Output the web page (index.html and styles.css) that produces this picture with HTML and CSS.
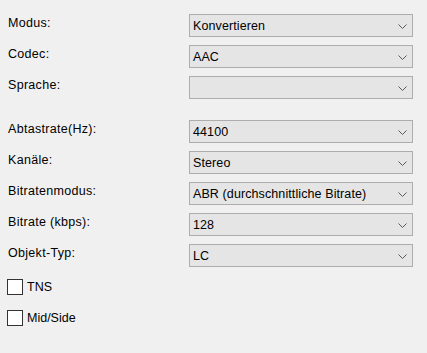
FILE: index.html
```html
<!DOCTYPE html>
<html>
<head>
<meta charset="utf-8">
<link rel="stylesheet" href="styles.css">
</head>
<body>
<div class="panel">
  <div class="grid">
    <div class="label">Modus:</div>
    <div class="combo"><span class="val">Konvertieren</span><svg class="chev" width="9" height="5" viewBox="0 0 9 5"><path d="M0.5 0.5 L4.5 4.5 L8.5 0.5" fill="none" stroke="#5a5a5a" stroke-width="1"/></svg></div>
    <div class="label">Codec:</div>
    <div class="combo"><span class="val">AAC</span><svg class="chev" width="9" height="5" viewBox="0 0 9 5"><path d="M0.5 0.5 L4.5 4.5 L8.5 0.5" fill="none" stroke="#5a5a5a" stroke-width="1"/></svg></div>
    <div class="label">Sprache:</div>
    <div class="combo"><span class="val"></span><svg class="chev" width="9" height="5" viewBox="0 0 9 5"><path d="M0.5 0.5 L4.5 4.5 L8.5 0.5" fill="none" stroke="#5a5a5a" stroke-width="1"/></svg></div>
  </div>
  <div class="grid second">
    <div class="label">Abtastrate(Hz):</div>
    <div class="combo"><span class="val">44100</span><svg class="chev" width="9" height="5" viewBox="0 0 9 5"><path d="M0.5 0.5 L4.5 4.5 L8.5 0.5" fill="none" stroke="#5a5a5a" stroke-width="1"/></svg></div>
    <div class="label">Kanäle:</div>
    <div class="combo"><span class="val">Stereo</span><svg class="chev" width="9" height="5" viewBox="0 0 9 5"><path d="M0.5 0.5 L4.5 4.5 L8.5 0.5" fill="none" stroke="#5a5a5a" stroke-width="1"/></svg></div>
    <div class="label">Bitratenmodus:</div>
    <div class="combo"><span class="val">ABR (durchschnittliche Bitrate)</span><svg class="chev" width="9" height="5" viewBox="0 0 9 5"><path d="M0.5 0.5 L4.5 4.5 L8.5 0.5" fill="none" stroke="#5a5a5a" stroke-width="1"/></svg></div>
    <div class="label">Bitrate (kbps):</div>
    <div class="combo"><span class="val">128</span><svg class="chev" width="9" height="5" viewBox="0 0 9 5"><path d="M0.5 0.5 L4.5 4.5 L8.5 0.5" fill="none" stroke="#5a5a5a" stroke-width="1"/></svg></div>
    <div class="label">Objekt-Typ:</div>
    <div class="combo"><span class="val">LC</span><svg class="chev" width="9" height="5" viewBox="0 0 9 5"><path d="M0.5 0.5 L4.5 4.5 L8.5 0.5" fill="none" stroke="#5a5a5a" stroke-width="1"/></svg></div>
  </div>
  <div class="checks">
    <label class="check"><span class="box"></span><span>TNS</span></label>
    <label class="check"><span class="box"></span><span>Mid/Side</span></label>
  </div>
</div>
</body>
</html>
```
FILE: styles.css
```css
html, body {
  margin: 0;
  padding: 0;
  background: #f0f0f0;
}
body {
  width: 427px;
  height: 353px;
  overflow: hidden;
  font-family: "Liberation Sans", Arial, sans-serif;
  font-size: 12.5px;
  color: #000;
}
.panel {
  padding: 14px 0 0 8px;
}
.grid {
  display: grid;
  grid-template-columns: 181px 224px;
  grid-auto-rows: 23px;
  row-gap: 8px;
}
.second {
  margin-top: 21px;
}
.label {
  line-height: 16px;
  padding-top: 1px;
  letter-spacing: 0.3px;
}
.combo {
  box-sizing: border-box;
  height: 23px;
  background: #e5e5e5;
  border: 1px solid #adadad;
  display: flex;
  align-items: center;
  justify-content: space-between;
  padding: 0 5px 0 3px;
}
.val {
  line-height: 16px;
  padding-top: 1px;
  letter-spacing: 0.1px;
}
.chev {
  display: block;
  margin-top: 1px;
}
.checks {
  margin-top: 12px;
  display: flex;
  flex-direction: column;
  gap: 15px;
}
.check {
  display: flex;
  align-items: center;
  gap: 4px;
  height: 16px;
  margin-left: -1px;
}
.box {
  box-sizing: border-box;
  width: 16px;
  height: 16px;
  border: 1px solid #333;
  background: #fff;
}
```
